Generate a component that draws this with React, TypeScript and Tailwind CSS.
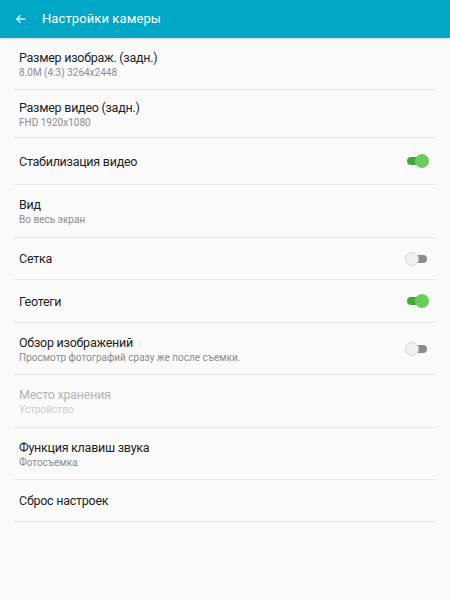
const rows: {
  title: string;
  sub?: string;
  toggle?: boolean;
  disabled?: boolean;
  h: string;
}[] = [
  { title: 'Размер изображ. (задн.)', sub: '8.0M (4:3) 3264x2448', h: 'h-[52px]' },
  { title: 'Размер видео (задн.)', sub: 'FHD 1920x1080', h: 'h-[48px]' },
  { title: 'Стабилизация видео', toggle: true, h: 'h-[47px]' },
  { title: 'Вид', sub: 'Во весь экран', h: 'h-[53px]' },
  { title: 'Сетка', toggle: false, h: 'h-[42px]' },
  { title: 'Геотеги', toggle: true, h: 'h-[43px]' },
  { title: 'Обзор изображений', sub: 'Просмотр фотографий сразу же после съемки.', toggle: false, h: 'h-[52px]' },
  { title: 'Место хранения', sub: 'Устройство', disabled: true, h: 'h-[53px]' },
  { title: 'Функция клавиш звука', sub: 'Фотосъемка', h: 'h-[52px]' },
  { title: 'Сброс настроек', h: 'h-[42px]' },
];

function Toggle({ on }: { on: boolean }) {
  if (on) {
    return (
      <div className="relative w-[24px] h-[14px] mr-[7px]">
        <div className="absolute left-[2px] top-[3px] w-[20px] h-[8px] rounded-full bg-[#43a838]" />
        <div className="absolute right-0 top-0 w-[14px] h-[14px] rounded-full bg-[#6acd5b]" />
      </div>
    );
  }
  return (
    <div className="relative w-[24px] h-[14px] mr-[7px]">
      <div className="absolute left-[2px] top-[3px] w-[20px] h-[8px] rounded-full bg-[#8a8a8a]" />
      <div className="absolute left-0 top-0 w-[14px] h-[14px] rounded-full bg-[#f1f1f1] border border-[#d4d4d4]" />
    </div>
  );
}

export default function App() {
  return (
    <div className="w-[450px] h-[600px] bg-[#fafafa] font-['Roboto',sans-serif] overflow-hidden">
      <div className="h-[38px] bg-[#00a8c6] flex items-center shadow-[0_1px_2px_rgba(0,0,0,0.15)]">
        <svg className="ml-[15px] w-[12px] h-[12px]" viewBox="0 0 24 24" fill="none" stroke="#d8f3f8" strokeWidth="2.6">
          <path d="M21 12H4M11 4.5L3.5 12L11 19.5" />
        </svg>
        <span className="ml-[15px] text-[13px] tracking-[0.1px] text-white">Настройки камеры</span>
      </div>
      <ul>
        {rows.map((r) => (
          <li key={r.title} className={`${r.h} mx-[14px] border-b border-[#e8e8e8] flex items-center`}>
            <div className="flex-1 pl-[5px] pt-[1px]">
              <p className={`text-[12.5px] tracking-[-0.25px] leading-[16px] ${r.disabled ? 'text-[#b5b5b5]' : 'text-[#1e1e1e]'}`}>{r.title}</p>
              {r.sub && (
                <p className={`text-[10px] leading-[13px] ${r.disabled ? 'text-[#cdcdcd]' : 'text-[#8c8c8c]'}`}>{r.sub}</p>
              )}
            </div>
            {r.toggle !== undefined && <Toggle on={r.toggle} />}
          </li>
        ))}
      </ul>
    </div>
  );
}
